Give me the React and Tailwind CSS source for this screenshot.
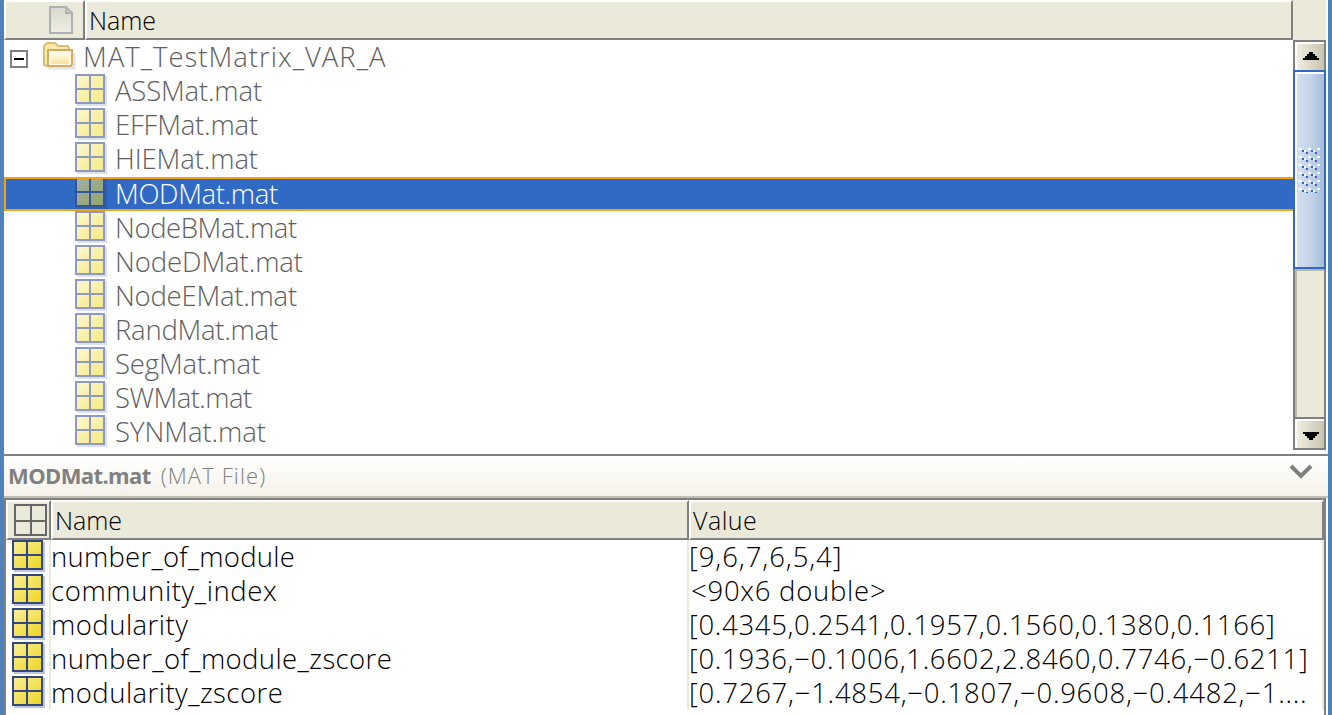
import { useLayoutEffect, useRef } from 'react';

function Fit({ width, className, children }) {
  const ref = useRef(null);
  useLayoutEffect(() => {
    const el = ref.current;
    el.style.letterSpacing = '0px';
    const natural = el.getBoundingClientRect().width;
    el.style.letterSpacing = (width - natural) / (children.length - 0.5) + 'px';
  }, [width, children]);
  return <span ref={ref} className={'whitespace-pre shrink-0 ' + className}>{children}</span>;
}

function MatIcon({ muted, selected }) {
  const id = muted ? (selected ? 'ms' : 'mm') : 'mn';
  const line = muted ? (selected ? '#30569c' : '#8e9abf') : '#34487f';
  const from = muted ? (selected ? '#9fb0a8' : '#fcf7d0') : '#f8ee94';
  const to = muted ? (selected ? '#95a467' : '#f6ea83') : '#eed725';
  const shadow = muted ? (selected ? '#2d60b5' : '#dde1ec') : '#bcc7da';
  return (
    <svg width="34" height="34" viewBox="0 0 34 34" className="shrink-0" shapeRendering="crispEdges">
      <defs>
        <linearGradient id={id} x1="0" y1="0" x2="1" y2="1">
          <stop offset="0" stopColor={from} />
          <stop offset="1" stopColor={to} />
        </linearGradient>
      </defs>
      <rect x="2" y="2" width={muted ? 30 : 31} height="30" fill={shadow} />
      <rect x="0" y="0" width={muted ? 30 : 31} height="30" fill={line} />
      <rect x="2" y="2" width={muted ? 26 : 27} height="26" fill={'url(#' + id + ')'} />
      <rect x="14" y="0" width="2" height="30" fill={line} />
      <rect x="0" y="14" width="30" height="2" fill={line} />
    </svg>
  );
}

function Folder() {
  return (
    <svg width="34" height="30" viewBox="0 0 34 30" className="shrink-0">
      <defs>
        <linearGradient id="fold" x1="0" y1="0" x2="0" y2="1">
          <stop offset="0" stopColor="#fffbe6" />
          <stop offset="1" stopColor="#fbe09a" />
        </linearGradient>
      </defs>
      <path d="M5 26H31V11" fill="none" stroke="#dfe2ec" strokeWidth="3" />
      <path d="M1 23V4L4 1H12L15 4H25L27 9V23L25 24H4Z" fill="#fce9a9" stroke="#d9bd79" strokeWidth="2" />
      <path d="M5 24V8H29V22L28 24Z" fill="#fffbe6" stroke="#d1ac66" strokeWidth="2" />
      <path d="M8 12H26V22H8Z" fill="url(#fold)" />
    </svg>
  );
}

const files = [
  ['ASSMat.mat', 147],
  ['EFFMat.mat', 143],
  ['HIEMat.mat', 143],
  ['MODMat.mat', 163],
  ['NodeBMat.mat', 182],
  ['NodeDMat.mat', 188],
  ['NodeEMat.mat', 182],
  ['RandMat.mat', 163],
  ['SegMat.mat', 145],
  ['SWMat.mat', 137],
  ['SYNMat.mat', 151],
];

const vars = [
  ['number_of_module', 244, '[9,6,7,6,5,4]', 153],
  ['community_index', 226, '<90x6 double>', 195],
  ['modularity', 137, '[0.4345,0.2541,0.1957,0.1560,0.1380,0.1166]', 586],
  ['number_of_module_zscore', 341, '[0.1936,−0.1006,1.6602,2.8460,0.7746,−0.6211]', 619],
  ['modularity_zscore', 232, '[0.7267,−1.4854,−0.1807,−0.9608,−0.4482,−1....', 618],
];

function ScrollBar() {
  return (
    <div className="flex h-[410px] w-[33px] shrink-0 flex-col border-2 border-[#808080]">
      <div className="flex h-7 items-start justify-center border-l-2 border-t-2 border-white bg-linear-to-r from-[#f0eee0] to-[#c9c4b0] pl-px pt-2">
        <svg width="16" height="8" viewBox="0 0 16 8" shapeRendering="crispEdges">
          <path d="M6 0H10V2H12V4H14V6H16V8H0V6H2V4H4V2H6Z" />
        </svg>
      </div>
      <div className="-mx-0.5 flex h-[199px] items-center border-2 border-[#316ac5]">
        <div className="flex h-full w-full items-start border-l-2 border-t-2 border-white bg-linear-to-r from-[#d2dff0] via-[#c3d3e8] to-[#a9bcd9] pl-0.5 pt-[74px]">
          <svg width="22" height="46" shapeRendering="crispEdges">
            <defs>
              <pattern id="grip" width="9" height="8" patternUnits="userSpaceOnUse">
                <path d="M0 0H3V2H0ZM5 2H7V4H5Z" fill="#fff" />
                <path d="M3 2H5V4H3ZM7 4H9V6H7Z" fill="#316ac5" />
              </pattern>
            </defs>
            <rect width="21" height="45" fill="url(#grip)" />
          </svg>
        </div>
      </div>
      <div className="h-[148px] border-l-2 border-t-2 border-[#b9b9a8] bg-[#ebe9d9]" />
      <div className="flex h-[31px] items-start justify-center border-t-2 border-[#808080]">
        <div className="flex h-full w-full justify-center border-l-2 border-t-2 border-white bg-linear-to-r from-[#f0eee0] to-[#c9c4b0] pl-px pt-[11px]">
          <svg width="16" height="8" viewBox="0 0 16 8" shapeRendering="crispEdges">
            <path d="M0 0H16V2H14V4H12V6H10V8H6V6H4V4H2V2H0Z" />
          </svg>
        </div>
      </div>
    </div>
  );
}

export default function App() {
  return (
    <div className="flex h-[715px] w-[1332px] flex-col overflow-hidden border-x-4 border-[#4f81bd] bg-white font-['Open_Sans','Noto_Sans',sans-serif] font-[340]">
      <div className="flex h-10 shrink-0 pr-0.5">
        <div className="flex h-10 w-[81px] border-b-2 border-l-2 border-r-2 border-t-2 border-b-[#808080] border-l-white border-r-[#808080] border-t-white bg-[#ebe9d9] pl-[43px] pt-1">
          <svg width="24" height="28" viewBox="0 0 24 28">
            <defs>
              <linearGradient id="doc" x1="0" y1="0" x2="0" y2="1">
                <stop offset="0" stopColor="#d8d8cc" />
                <stop offset="1" stopColor="#f0eee2" />
              </linearGradient>
            </defs>
            <path d="M1 1H17L23 7V27H1Z" fill="url(#doc)" stroke="#b0b0b0" strokeWidth="2" />
            <path d="M17 1V7H23" fill="none" stroke="#b0b0b0" strokeWidth="2" />
          </svg>
        </div>
        <div className="flex h-10 w-[1208px] items-center border-2 border-b-[#808080] border-l-white border-r-[#808080] border-t-white bg-[#ebe9d9] pl-[2px] pt-0.5 text-[25px] text-black">
          <Fit width={67} className="">Name</Fit>
        </div>
        <div className="grow bg-[#ebe9d9]" />
      </div>
      <div className="flex h-[414px] shrink-0 pr-0.5">
        <div className="flex w-[1289px] flex-col">
          <div className="flex h-[34px] shrink-0 items-center pl-1.5">
            <svg width="18" height="18" viewBox="0 0 18 18" className="mt-1 shrink-0" shapeRendering="crispEdges">
              <rect x="1" y="1" width="16" height="16" fill="#fff" stroke="#808080" strokeWidth="2" />
              <rect x="4" y="8" width="10" height="2" />
            </svg>
            <span className="ml-[15px] flex"><Folder /></span>
            <Fit width={303} className="ml-[6px] text-[27.5px] text-[#606060]">MAT_TestMatrix_VAR_A</Fit>
          </div>
          {files.map(([name, w], i) => (
            <div
              key={name}
              className={
                'flex shrink-0 items-center ' +
                (i === 2 ? 'h-[35px] pb-px ' : 'h-[34px] ') +
                (i === 3 ? 'border-y-2 border-l-2 border-[#f3a415] bg-[#316ac5] pl-[69px] text-white' : 'pl-[71px] text-[#606060]')
              }
            >
              <span className={'flex items-center ' + (i === 3 ? 'h-[30px] overflow-hidden' : 'h-[34px]')}>
                <MatIcon muted selected={i === 3} />
              </span>
              <Fit width={w} className="ml-[6px] text-[27.5px]">{name}</Fit>
            </div>
          ))}
        </div>
        <ScrollBar />
      </div>
      <div className="flex h-11 shrink-0 items-center border-b-2 border-t-2 border-b-[#c3c0b3] border-t-[#808080] bg-linear-to-b from-white to-[#f4f2e8] pb-px pl-1 text-[22px] text-[#808080]">
        <Fit width={143} className="font-bold">MODMat.mat</Fit>
        <Fit width={105} className="ml-[10px]">(MAT File)</Fit>
        <svg width="24" height="16" viewBox="0 0 24 16" className="mb-2 ml-auto mr-[15px]">
          <path d="M2 2L12 12L22 2" fill="none" stroke="#808080" strokeWidth="4" />
        </svg>
      </div>
      <div className="mr-0.5 flex grow flex-col border-l-2 border-r-2 border-t-2 border-[#808080]">
        <div className="flex h-10 shrink-0 text-[25px] text-black">
          <div className="flex w-[45px] border-2 border-b-[#808080] border-l-white border-r-[#808080] border-t-white bg-[#ebe9d9] pl-1.5 pt-0.5">
            <svg width="33" height="32" viewBox="0 0 33 32" className="shrink-0" shapeRendering="crispEdges">
              <path d="M1 1H32V31H1ZM17 1V31M1 17H32" fill="none" stroke="#666" strokeWidth="2" />
            </svg>
          </div>
          <div className="flex w-[638px] items-center border-2 border-b-[#808080] border-l-white border-r-[#808080] border-t-white bg-[#ebe9d9] pl-[2px] pt-0.5">
            <Fit width={67} className="">Name</Fit>
          </div>
          <div className="flex grow items-center border-2 border-b-[#808080] border-l-white border-r-[#808080] border-t-white bg-[#ebe9d9] pl-[2px] pt-0.5">
            <Fit width={64} className="">Value</Fit>
          </div>
        </div>
        {vars.map(([name, w, value, vw], i) => (
          <div key={name} className="flex h-[34px] shrink-0 items-center text-[27.5px] text-black">
            <div className="flex h-[34px] w-[45px] border-r-2 border-[#ebe9d9] pl-1.5"><MatIcon /></div>
            <div className="flex h-[34px] w-[638px] items-center border-r-2 border-[#ebe9d9]">
              <Fit width={w} className="">{name}</Fit>
            </div>
            <div className={'flex h-[34px] grow items-center border-r-2 border-[#ebe9d9] ' + (i === 1 ? 'pl-0.5' : '')}>
              <Fit width={vw} className="">{value}</Fit>
            </div>
          </div>
        ))}
      </div>
    </div>
  );
}
